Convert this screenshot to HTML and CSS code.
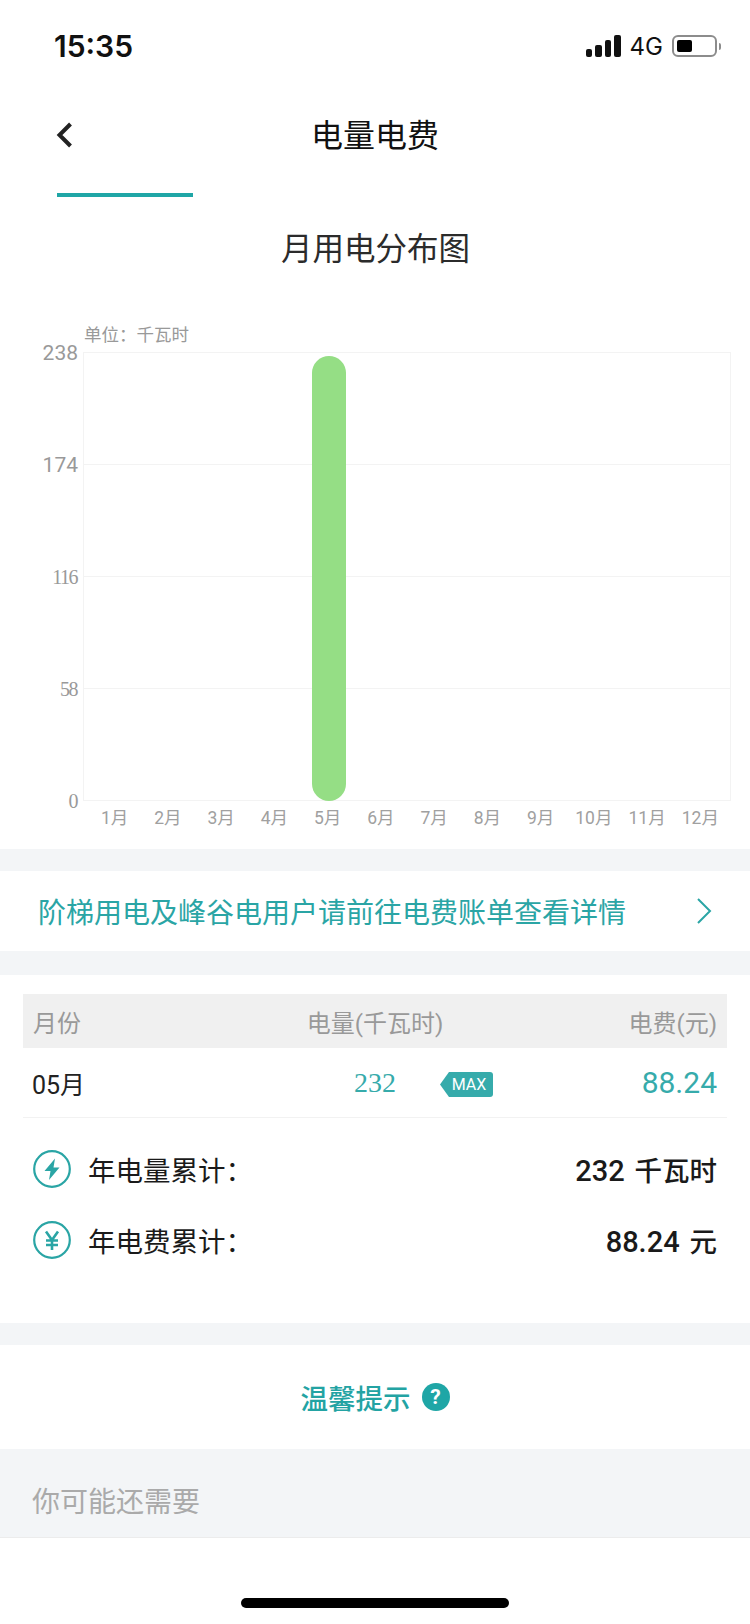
FILE: index.html
```html
<!DOCTYPE html>
<html lang="zh-CN">
<head>
    <meta charset="UTF-8">
    <meta name="viewport" content="width=device-width, initial-scale=1.0">
    <title>电量电费</title>
    <link rel="stylesheet" href="styles.css">
</head>
<body>
    <div class="status-bar">
        <span class="time">15:35</span>
        <div class="status-right">
            <div class="signal"><i></i><i></i><i></i><i></i></div>
            <span class="net">4G</span>
            <div class="battery"><i></i></div>
            <div class="battery-nub"></div>
        </div>
    </div>

    <div class="nav">
        <svg class="back" width="18" height="26" viewBox="0 0 18 26"><path d="M15.5 2 L4.5 13 L15.5 24" fill="none" stroke="#222" stroke-width="4"/></svg>
        <h1>电量电费</h1>
    </div>
    <div class="tab-line"></div>

    <section class="chart-section">
        <h2>月用电分布图</h2>
        <div class="unit">单位：千瓦时</div>
        <div class="chart">
            <div class="y-axis">
                <span>238</span>
                <span>174</span>
                <span class="serif">116</span>
                <span class="serif">58</span>
                <span class="serif">0</span>
            </div>
            <div class="plot">
                <div class="grid-row"></div>
                <div class="grid-row"></div>
                <div class="grid-row"></div>
                <div class="grid-row"></div>
                <div class="bar"></div>
            </div>
        </div>
        <div class="x-axis">
            <span>1月</span><span>2月</span><span>3月</span><span>4月</span><span>5月</span><span>6月</span>
            <span>7月</span><span>8月</span><span>9月</span><span>10月</span><span>11月</span><span>12月</span>
        </div>
    </section>

    <a class="notice">
        <span>阶梯用电及峰谷电用户请前往电费账单查看详情</span>
        <svg width="16" height="26" viewBox="0 0 16 26"><path d="M2 1 L14 13 L2 25" fill="none" stroke="#2aa5a5" stroke-width="2"/></svg>
    </a>

    <section class="table-section">
        <div class="table-head">
            <span class="col-month">月份</span>
            <span class="col-power">电量(千瓦时)</span>
            <span class="col-fee">电费(元)</span>
        </div>
        <div class="table-row">
            <span class="col-month month-val">05月</span>
            <span class="col-power power-val">232
                <svg class="max-tag" width="53" height="25" viewBox="0 0 53 25"><path d="M9 0 H50 a3 3 0 0 1 3 3 V22 a3 3 0 0 1 -3 3 H9 L0 12.5 Z" fill="#36abab"/><text x="29" y="18" text-anchor="middle" class="max-text">MAX</text></svg>
            </span>
            <span class="col-fee fee-val">88.24</span>
        </div>
        <div class="total">
            <svg width="38" height="38" viewBox="0 0 38 38"><circle cx="19" cy="19" r="17.8" fill="none" stroke="#2aa5a5" stroke-width="2.2"/><path d="M22 8.5 L11.5 21 H17.5 L16 30 L26.5 17.5 H20.5 Z" fill="#2aa5a5"/></svg>
            <span class="total-label">年电量累计：</span>
            <span class="total-val"><span class="num">232</span> 千瓦时</span>
        </div>
        <div class="total">
            <svg width="38" height="38" viewBox="0 0 38 38"><circle cx="19" cy="19" r="17.8" fill="none" stroke="#2aa5a5" stroke-width="2.2"/><path d="M13 10.5 L19 19 L25 10.5 M13 19.5 H25 M13 24 H25 M19 19 V29" fill="none" stroke="#2aa5a5" stroke-width="2.6"/></svg>
            <span class="total-label">年电费累计：</span>
            <span class="total-val"><span class="num">88.24</span> 元</span>
        </div>
    </section>

    <div class="tips">
        <span>温馨提示</span>
        <span class="help">?</span>
    </div>

    <div class="more">你可能还需要</div>

    <div class="home-wrap"><div class="home-bar"></div></div>
</body>
</html>
```

FILE: styles.css
```css
* {
    box-sizing: border-box;
}
body {
    margin: 0;
    width: 750px;
    height: 1624px;
    overflow: hidden;
    background: #fff;
    font-family: "Roboto", "Noto Sans CJK SC", sans-serif;
    color: #222;
}
.status-bar {
    height: 92px;
    padding: 0 29px 0 54px;
    display: flex;
    align-items: center;
    justify-content: space-between;
}
.time {
    font-family: "Inter", sans-serif;
    font-size: 30px;
    font-weight: 600;
    color: #111;
}
.status-right {
    display: flex;
    align-items: center;
}
.signal {
    display: flex;
    align-items: flex-end;
    gap: 3px;
    height: 22px;
}
.signal i {
    width: 6.5px;
    background: #111;
    border-radius: 2px;
}
.signal i:nth-child(1) { height: 8px; }
.signal i:nth-child(2) { height: 12px; }
.signal i:nth-child(3) { height: 17px; }
.signal i:nth-child(4) { height: 22px; }
.net {
    margin-left: 9px;
    font-family: "Inter", sans-serif;
    font-size: 24px;
    color: #111;
}
.battery {
    margin-left: 9px;
    width: 45px;
    height: 22px;
    border: 2px solid #8c8c8c;
    border-radius: 6px;
    padding: 3px;
}
.battery i {
    display: block;
    width: 15px;
    height: 100%;
    background: #000;
    border-radius: 2px;
}
.battery-nub {
    margin-left: 2px;
    width: 2px;
    height: 7px;
    background: #8c8c8c;
    border-radius: 0 2px 2px 0;
}
.nav {
    height: 86px;
    padding-bottom: 4px;
    position: relative;
    display: flex;
    align-items: center;
    justify-content: center;
}
.nav h1 {
    margin: 0;
    font-size: 32px;
    font-weight: 400;
    color: #111;
}
.back {
    position: absolute;
    left: 55px;
    top: 30px;
}
.tab-line {
    margin: 15px 0 0 57px;
    width: 136px;
    height: 4px;
    background: #1fa6a6;
}
.chart-section {
    height: 652px;
    padding-top: 30px;
}
.chart-section h2 {
    margin: 0;
    padding-left: 1px;
    text-align: center;
    font-size: 31.5px;
    line-height: 46px;
    font-weight: 400;
    color: #2b2b2b;
}
.unit {
    margin: 48px 0 0 84px;
    font-size: 17.5px;
    line-height: 28px;
    color: #999;
}
.chart {
    display: flex;
    height: 449px;
    margin-top: 3px;
}
.y-axis {
    width: 78px;
    margin: -11px 0 -12px 0;
    display: flex;
    flex-direction: column;
    justify-content: space-between;
    align-items: flex-end;
    font-size: 21px;
    line-height: 24px;
    color: #999;
}
.y-axis .serif {
    margin-right: 1px;
    font-family: "Liberation Serif", serif;
    font-size: 20px;
    letter-spacing: -1.5px;
}
.plot {
    margin-left: 5px;
    width: 648px;
    position: relative;
    display: flex;
    flex-direction: column;
    border-left: 1px solid #f3f3f3;
    border-right: 1px solid #f3f3f3;
    border-top: 1px solid #f3f3f3;
}
.grid-row {
    flex: 1;
    border-bottom: 1px solid #f3f3f3;
}
.bar {
    position: absolute;
    left: 228px;
    top: 3px;
    bottom: 0;
    width: 34px;
    background: #95de85;
    border-radius: 17px;
}
.x-axis {
    margin: 5px 0 0 88px;
    width: 639px;
    display: grid;
    grid-template-columns: repeat(12, 53.25px);
    justify-items: center;
    font-size: 17.5px;
    line-height: 24px;
    color: #a0a0a0;
}
.notice {
    border-top: 22px solid #f3f5f7;
    border-bottom: 24px solid #f3f5f7;
    height: 126px;
    padding: 0 38px;
    display: flex;
    align-items: center;
    justify-content: space-between;
    font-size: 28px;
    color: #2aa5a5;
}
.table-section {
    height: 348px;
    padding: 19px 23px 0;
}
.table-head,
.table-row {
    display: grid;
    grid-template-columns: 1fr 300px 1fr;
    align-items: center;
    padding: 0 10px;
}
.table-head {
    height: 54px;
    background: #f0f0f0;
    font-size: 24px;
    color: #999;
}
.table-row {
    height: 70px;
    border-bottom: 1px solid #f2f2f2;
    font-size: 24px;
}
.month-val {
    margin-left: -1px;
    font-size: 25px;
}
.col-power {
    text-align: center;
}
.col-fee {
    text-align: right;
}
.power-val {
    position: relative;
    font-family: "Liberation Serif", serif;
    font-size: 28px;
    color: #36abab;
}
.max-tag {
    position: absolute;
    left: 215px;
    top: 5px;
}
.max-text {
    font-family: "Roboto", sans-serif;
    font-size: 16px;
    fill: #fff;
}
.fee-val {
    font-size: 30px;
    color: #36abab;
}
.total {
    height: 71px;
    padding: 0 10px;
    display: flex;
    align-items: center;
    font-size: 27.5px;
    color: #1a1a1a;
}
.table-row + .total {
    margin-top: 15px;
}
.total-label {
    margin-left: 17px;
}
.total-val {
    margin-left: auto;
    font-weight: 500;
}
.num {
    margin-right: 3px;
    font-size: 29px;
}
.tips {
    height: 126px;
    border-top: 22px solid #f3f5f7;
    display: flex;
    align-items: center;
    justify-content: center;
    gap: 11px;
    font-size: 27.5px;
    font-weight: 500;
    color: #23a3a3;
}
.help {
    width: 28px;
    height: 28px;
    border-radius: 50%;
    background: #1fa6a6;
    color: #fff;
    font-family: "Roboto", sans-serif;
    font-size: 21px;
    font-weight: 700;
    line-height: 28px;
    text-align: center;
}
.more {
    height: 89px;
    padding: 14px 0 0 32px;
    display: flex;
    align-items: center;
    background: #f3f5f7;
    border-bottom: 1px solid #ececec;
    font-size: 28px;
    color: #aaa;
}
.home-wrap {
    padding-top: 60px;
    display: flex;
    justify-content: center;
}
.home-bar {
    width: 268px;
    height: 10px;
    background: #000;
    border-radius: 5px;
}
```
